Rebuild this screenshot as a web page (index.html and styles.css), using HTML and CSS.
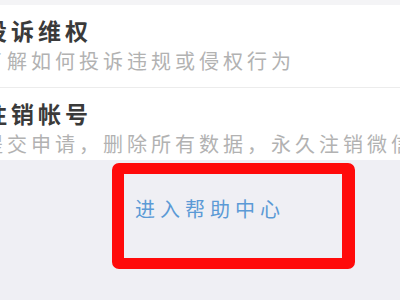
FILE: index.html
```html
<!DOCTYPE html>
<html lang="zh">
<head>
<meta charset="utf-8">
<link rel="stylesheet" href="styles.css">
</head>
<body>
<div class="top-strip"></div>
<div class="card">
  <div class="item">
    <div class="title">投诉维权</div>
    <div class="desc">了解如何投诉违规或侵权行为</div>
  </div>
  <div class="item last">
    <div class="title">注销帐号</div>
    <div class="desc">提交申请，删除所有数据，永久注销微信</div>
  </div>
</div>
<div class="help-box">
  <a class="help-link">进入帮助中心</a>
</div>
</body>
</html>
```
FILE: styles.css
```css
html, body {
  margin: 0;
  padding: 0;
}
body {
  width: 400px;
  height: 300px;
  overflow: hidden;
  background: #efeff4;
  font-family: "Noto Sans CJK SC", "Noto Sans", sans-serif;
}
.top-strip {
  height: 5px;
  background: #f4f4f6;
}
.card {
  background: #ffffff;
  overflow: hidden;
}
.item {
  margin-left: -16px;
  padding: 11px 0 14px 0;
  border-bottom: 1px solid #ececec;
  white-space: nowrap;
}
.item.last {
  border-bottom: none;
  padding-bottom: 4px;
}
.title {
  font-size: 23px;
  line-height: 28px;
  font-weight: 700;
  letter-spacing: 4px;
  color: #3a3a3a;
}
.desc {
  margin-top: 5px;
  margin-left: -1px;
  font-size: 20px;
  line-height: 24px;
  letter-spacing: 4px;
  color: #b2b2b2;
}
.help-box {
  margin: 3px 0 0 112px;
  width: 218px;
  height: 84px;
  border: 11px solid #ff0a0a;
  border-left-width: 12px;
  border-right-width: 13px;
  border-radius: 7px;
  padding: 0;
}
.help-link {
  display: block;
  padding: 23px 0 0 11px;
  font-size: 20px;
  line-height: 24px;
  letter-spacing: 5px;
  color: #5b9ad6;
}
```
